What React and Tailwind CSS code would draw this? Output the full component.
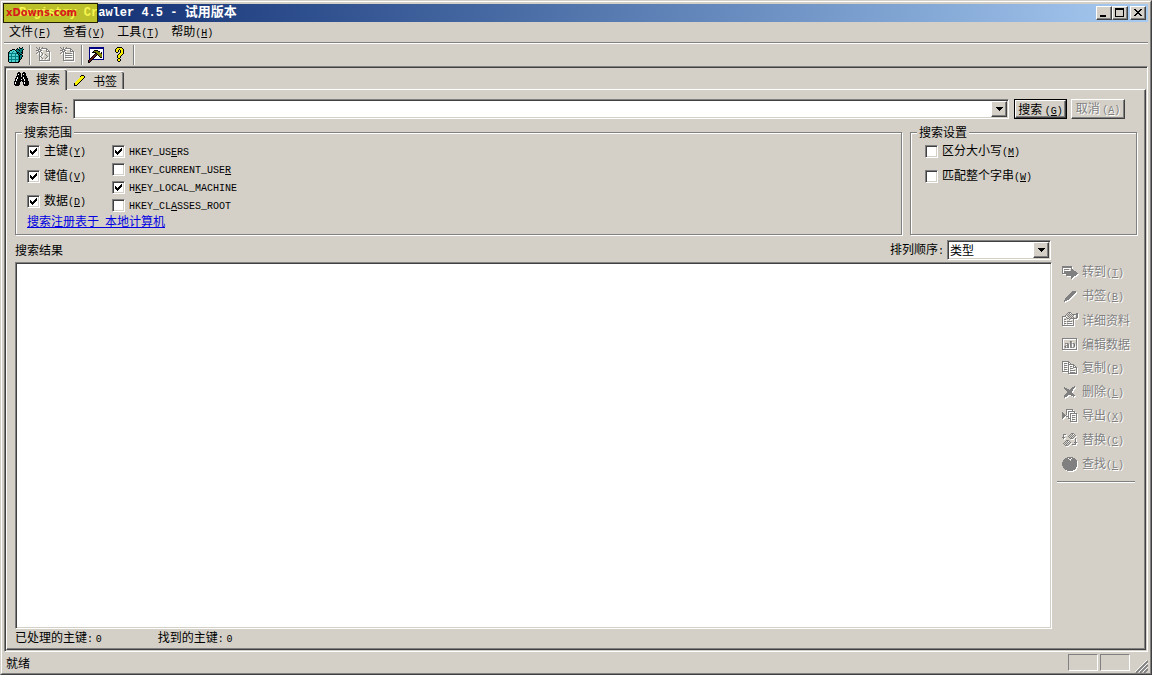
import React, { useState } from 'react';

const RAISED =
  'bg-[#d4d0c8] border border-t-white border-l-white border-r-[#404040] border-b-[#404040] shadow-[inset_-1px_-1px_0_#808080]';
const SUNKEN =
  'bg-white border border-t-[#808080] border-l-[#808080] border-r-white border-b-white shadow-[inset_1px_1px_0_#404040,inset_-1px_-1px_0_#d4d0c8]';
const MONO = "font-['Liberation_Mono',monospace] text-[10px]";

const PALETTE = {
  k: '#000000',
  g: '#808080',
  w: '#ffffff',
  t: '#008080',
  c: '#50d0d0',
  n: '#000080',
  y: '#f8f000',
  o: '#808000',
  r: '#601818',
};

const ICONS = {
  registry: [
    '...........k..k.',
    '.........k.tkkt.',
    '....kkk.ktkttttk',
    '..kkcccktttkttk.',
    '.kccctccktttttk.',
    'ktcctccctkkttkk.',
    'kttttttttktkttk.',
    'kcctccctccktkk..',
    'kcctccctcctkttk.',
    'kttttttttttkttk.',
    'kcctccctcctktk..',
    'kcctccctcctktk..',
    'kttttttttttkk...',
    'kcctccctcctk....',
    'kcctccctcckk....',
    '.kkkkkkkkkk.....',
  ],
  newKey: [
    'g..g..g.........',
    '.g.g.gggggg.....',
    '..ggg.....gg....',
    'ggg.gg....g.g...',
    '..ggg.....gggg..',
    '.g.g.g.......g..',
    'g..g..g......g..',
    '...g..g..g...g..',
    '...g.g....g..g..',
    '...gg......g.g..',
    '...g.g....g..g..',
    '...g..g..g...g..',
    '...g.........g..',
    '...ggggggggggg..',
  ],
  newValue: [
    'g..g..g.........',
    '.g.g.gggggg.....',
    '..ggg.....gg....',
    'ggg.gg....g.g...',
    '..ggg.....gggg..',
    '.g.g.g.......g..',
    'g..g.ggggggg.g..',
    '...g.........g..',
    '...g.ggggggg.g..',
    '...g.........g..',
    '...g.ggggggg.g..',
    '...g.........g..',
    '...g.........g..',
    '...ggggggggggg..',
  ],
  hammer: [
    '.nnnnnnnnnnnnnnn',
    '.nnnnnnnnnnnnnnn',
    '.nwwwwwwwwwwwwwn',
    '.nwwwwkkkkwwwwwn',
    '.nwwwkooookkwwwn',
    '.nwwkkkkoooowkwn',
    '.nwwwwwkkooookwn',
    '.nwwwwkrrkoooown',
    '.nwwwkrrkwkooown',
    '.nwwkrrkwwwkoown',
    '.nwkrrkwwwwwkkwn',
    '.nkrrkwwwwwwwwwn',
    '.krrknnnnnnnnnnn',
    'krrk............',
    'krk.............',
    'kk..............',
  ],
  help: [
    '.....kkkkk......',
    '....kyyyyyk.....',
    '...kyyykyyyk....',
    '...kyyk.kyyk....',
    '...kyyk.kyyk....',
    '....kk..kyyk....',
    '.......kyyyk....',
    '......kyyyk.....',
    '.....kyyyk......',
    '.....kyyk.......',
    '.....kyyk.......',
    '......kk........',
    '.....kyyk.......',
    '.....kyyk.......',
    '......kk........',
  ],
  binoculars: [
    '................',
    '....kk...kk.....',
    '...kkkk.kkkk....',
    '...kwkk.kwkk....',
    '...kkkk.kkkk....',
    '..kkkkk.kkkkk...',
    '..kwkkkkkwkkk...',
    '.kkwkkkkkwkkkk..',
    '.kwkkkkwkkwkkk..',
    '.kwkkkkkkkwkkk..',
    'kkkkkkk.kkkkkkk.',
    'kwkkkk...kwkkkk.',
    'kwkkkk...kwkkkk.',
    'kkkkkk...kkkkkk.',
    '.kkkk.....kkkk..',
  ],
  pencil: [
    '................',
    '................',
    '..........kkk...',
    '.........kyyyk..',
    '.........yyyyk..',
    '........yyyyk...',
    '.......yyyyk....',
    '......yyyyk.....',
    '.....yyyyk......',
    '....yyyyk.......',
    '...kyyyk........',
    '...kyyk.........',
    '...kkk..........',
    '................',
  ],
  goto: [
    '................',
    '................',
    'gggggggggg......',
    'gggggggggg......',
    'g........g......',
    'g.ggggg..gg.....',
    'g........ggg....',
    'g.gggggggggggg..',
    'g.ggggggggggggg.',
    'gggggggggggggggg',
    '....ggggggggggg.',
    '....gggggggggg..',
    '.........ggg....',
    '.........gg.....',
    '.........g......',
    '................',
  ],
  bookmark: [
    '................',
    '................',
    '................',
    '..........gggg..',
    '.........ggggg..',
    '........ggggg...',
    '.......ggggg....',
    '......ggggg.....',
    '.....ggggg......',
    '....ggggg.......',
    '...ggggg........',
    '...gggg.........',
    '..ggg...........',
    '..g.............',
    '................',
    '................',
  ],
  details: [
    '......ggg.......',
    '.....g.g.g....gg',
    '....g.g.g.gggggg',
    '...g.g.g.g.g..gg',
    'gggg..g.g.g...gg',
    'g...g..g.g.g..gg',
    'g....gg.ggggggg.',
    'g.gg...g...g....',
    'g..........g....',
    'g.gg.ggggg.g....',
    'g..........g....',
    'g.gg.ggggg.g....',
    'g..........g....',
    'gggggggggggg....',
  ],
  copy: [
    '................',
    'ggggggg.........',
    'g.....gg........',
    'g.ggg.g.g.......',
    'g.....gggggg....',
    'g.ggg.g....gg...',
    'g.....g.gg.g.g..',
    'g.ggg.g....gggg.',
    'g.....g.ggg...g.',
    'g.ggg.g.......g.',
    'g.....g.ggggg.g.',
    'ggggggg.......g.',
    '......g.ggggg.g.',
    '......ggggggggg.',
  ],
  remove: [
    '................',
    '................',
    '............g...',
    '..g.......ggg...',
    '..ggg....ggg....',
    '...gggg.ggg.....',
    '....ggggggg.....',
    '.....ggggg......',
    '.....ggggg......',
    '....ggggggg.....',
    '...ggggggggg....',
    '..gggg...gggg...',
    '..ggg......g....',
    '..g.............',
  ],
  export: [
    '................',
    '....ggggggg.....',
    '....g.....g.....',
    '....g.ggggggg...',
    'g...g.g.....g...',
    'gg..g.g.ggggggg.',
    'ggg.g.g.g.....g.',
    'gggg..g.g.ggg.g.',
    'ggg.ggg.g.....g.',
    'gg....g.g.ggg.g.',
    'g.....ggg.....g.',
    '........g.ggg.g.',
    '........g.....g.',
    '........ggggggg.',
  ],
  replace: [
    '................',
    '.........ggg....',
    '.ggg....g.g.g...',
    '.g.....g.g.g.g..',
    '.g....g.g.g.g...',
    'ggg....g.g.g....',
    '.g......ggg..g..',
    '.............g..',
    '....ggg......g..',
    '...g.g.g.....g..',
    '..g.g.g.g...ggg.',
    '.g.g.g.g.....g..',
    '..g.g.g...gggg..',
    '...ggg..........',
  ],
  find: [
    '................',
    '.....gggggg.....',
    '...ggg.gg.ggg...',
    '..ggggg..ggggg..',
    '.ggggggg.gggggg.',
    '.gggggggggggggg.',
    'ggggggggggggggg.',
    'ggggggggggggggg.',
    'ggggggggggggggg.',
    'ggggggggggggggg.',
    '.gggggggggggggg.',
    '.ggggggggggggg..',
    '..gggggggggggg..',
    '...gggggggggg...',
    '.....gggggg.....',
  ],
};

const WHITE_EDGE = 'drop-shadow-[1px_1px_0_#fff]';

const Icon = ({ name, className = '' }) => (
  <svg viewBox="0 0 16 16" shapeRendering="crispEdges" aria-hidden="true" className={`size-4 shrink-0 ${className}`}>
    {ICONS[name].map((row, y) =>
      [...row].map((c, x) =>
        c === '.' ? null : <rect key={`${x}-${y}`} x={x} y={y} width="1" height="1" fill={PALETTE[c]} />
      )
    )}
  </svg>
);

const EditIcon = ({ className = '' }) => (
  <svg viewBox="0 0 16 16" aria-hidden="true" className={`size-4 shrink-0 ${className}`}>
    <rect x="0.5" y="2.5" width="14" height="11" fill="none" stroke="#808080" shapeRendering="crispEdges" />
    <text x="2" y="12" fontFamily="Liberation Serif, serif" fontSize="11" fontWeight="bold" fill="#707070">ab</text>
  </svg>
);

const Arrow = () => (
  <svg viewBox="0 0 7 4" shapeRendering="crispEdges" aria-hidden="true" className="h-1 w-[7px]">
    <path d="M0 0h7v1H6v1H5v1H4v1H3V3H2V2H1V1H0z" />
  </svg>
);

// Accelerator key shown after a label, e.g. "(F)"
const Key = ({ k }) => (
  <span className={MONO}>
    (<u>{k}</u>)
  </span>
);

const Separator = () => <div className="mx-px h-5 w-[2px] border-l border-[#808080] bg-white" />;

const Check = ({ defaultChecked, children }) => (
  <label className="flex items-center gap-1 leading-4">
    <span className="relative flex">
      <input type="checkbox" defaultChecked={defaultChecked} className={`peer size-[13px] appearance-none ${SUNKEN}`} />
      <svg
        viewBox="0 0 7 7"
        shapeRendering="crispEdges"
        className="pointer-events-none absolute top-[3px] left-[3px] hidden size-[7px] peer-checked:block"
      >
        <path d="M0 2h1v1h1v1h1V3h1V2h1V1h1V0h1v3H6v1H5v1H4v1H3v1H2V6H1V5H0z" />
      </svg>
    </span>
    <span className="whitespace-pre">{children}</span>
  </label>
);

const MENUS = [
  ['文件', 'F'],
  ['查看', 'V'],
  ['工具', 'T'],
  ['帮助', 'H'],
];

const TOOLS = [
  ['registry', '注册表'],
  null,
  ['newKey', '新建主键', true],
  ['newValue', '新建键值', true],
  null,
  ['hammer', '选项'],
  ['help', '帮助'],
  null,
];

const SCOPES = [
  ['主键', 'Y'],
  ['键值', 'V'],
  ['数据', 'D'],
];

const HIVES = [
  ['HKEY_US', 'E', 'RS', true],
  ['HKEY_CURRENT_USE', 'R', '', false],
  ['H', 'K', 'EY_LOCAL_MACHINE', true],
  ['HKEY_CL', 'A', 'SSES_ROOT', false],
];

const ACTIONS = [
  ['goto', '转到', 'T'],
  ['bookmark', '书签', 'B'],
  ['details', '详细资料'],
  ['edit', '编辑数据'],
  ['copy', '复制', 'P'],
  ['remove', '删除', 'L'],
  ['export', '导出', 'X'],
  ['replace', '替换', 'C'],
  ['find', '查找', 'L'],
];

function TitleBar() {
  return (
    <header className="relative flex h-[18px] items-center bg-linear-to-r from-[#0a246a] to-[#a6caf0] pr-[2px] pl-4 text-white">
      <h1 className="flex-1 font-['Liberation_Mono','Noto_Sans_CJK_SC',monospace] text-[12px] leading-[18px] font-bold">
        Registry Crawler 4.5 - <span className="text-[13px]">试用版本</span>
      </h1>
      <div className="flex text-black">
        <button aria-label="最小化" className={`h-[14px] w-4 ${RAISED}`}>
          <svg viewBox="0 0 14 12" shapeRendering="crispEdges">
            <path d="M3 8h6v2H3z" />
          </svg>
        </button>
        <button aria-label="最大化" className={`h-[14px] w-4 ${RAISED}`}>
          <svg viewBox="0 0 14 12" shapeRendering="crispEdges">
            <path fillRule="evenodd" d="M2 1h9v9H2zM3 3v6h7V3z" />
          </svg>
        </button>
        <button aria-label="关闭" className={`ml-[2px] h-[14px] w-4 ${RAISED}`}>
          <svg viewBox="0 0 14 12" shapeRendering="crispEdges">
            <path d="M3 2h2v1h1v1h2V3h1V2h2v1h-1v1H9v1H8v1h1v1h1v1h1v1H9V8H8V7H6v1H5v1H3V8h1V7h1V6h1V5H5V4H4V3H3z" />
          </svg>
        </button>
      </div>
      {/* site badge lying over the caption */}
      <div className="absolute -top-px left-0 h-5 w-[95px] border border-[#202000] bg-[#f6f112]/75 pl-[2px] font-['DejaVu_Sans',sans-serif] text-[10px] leading-[18px] font-bold text-[#d81818]">
        xDowns.com
      </div>
    </header>
  );
}

function Tabs({ tab, setTab }) {
  return (
    <div role="tablist" className="flex h-[21px] items-end">
      <button
        role="tab"
        aria-selected={tab === 'search'}
        onClick={() => setTab('search')}
        className="relative z-10 -mb-px flex h-[21px] items-center gap-[6px] rounded-t-[2px] border-t border-l border-white bg-[#d4d0c8] px-[7px] pb-[2px] shadow-[inset_-1px_0_0_#404040,inset_-2px_0_0_#808080]"
      >
        <Icon name="binoculars" />
        搜索
      </button>
      <button
        role="tab"
        aria-selected={tab === 'bookmarks'}
        onClick={() => setTab('bookmarks')}
        className="flex h-[18px] items-center gap-[6px] rounded-t-[2px] border-t border-white pr-[7px] pl-1 shadow-[inset_-1px_0_0_#404040,inset_-2px_0_0_#808080]"
      >
        <Icon name="pencil" />
        书签
      </button>
    </div>
  );
}

function SearchBar() {
  return (
    <div className="flex items-start pr-3">
      <label htmlFor="target" className="w-[58px] leading-[18px] whitespace-nowrap">
        搜索目标<span className={MONO}>:</span>
      </label>
      <div className={`flex h-5 flex-1 p-px ${SUNKEN}`}>
        <input id="target" type="text" className="min-w-0 flex-1 bg-transparent px-1 outline-none" />
        <button aria-label="展开" className={`flex w-4 items-center justify-center ${RAISED}`}>
          <Arrow />
        </button>
      </div>
      <div className="ml-[5px] border border-black">
        <button className={`block h-[18px] w-[51px] whitespace-nowrap leading-[16px] ${RAISED}`}>
          搜索 <Key k="G" />
        </button>
      </div>
      <button
        disabled
        className={`ml-1 h-5 w-[54px] whitespace-nowrap leading-[16px] text-[#808080] [text-shadow:1px_1px_0_#fff] ${RAISED}`}
      >
        取消 <Key k="A" />
      </button>
    </div>
  );
}

const Group = ({ title, className = '', children }) => (
  <fieldset
    className={`border border-[#808080] shadow-[1px_1px_0_#fff,inset_1px_1px_0_#fff] ${className}`}
  >
    <legend className="ml-[6px] bg-[#d4d0c8] px-[2px] leading-[14px]">{title}</legend>
    {children}
  </fieldset>
);

function Options() {
  return (
    <div className="mt-[5px] flex gap-2">
      <Group title="搜索范围" className="flex-1">
        <div className="pb-[3px] pl-[11px]">
          <div className="flex gap-[26px]">
            <div>
              {SCOPES.map(([label, k]) => (
                <div key={label} className="flex h-[25px] items-center">
                  <Check defaultChecked>
                    {label}<Key k={k} />
                  </Check>
                </div>
              ))}
            </div>
            <div className="pt-[3px]">
              {HIVES.map(([before, k, after, on]) => (
                <div key={before} className="flex h-[18px] items-center">
                  <Check defaultChecked={on}>
                    <span className={MONO}>{before}<u>{k}</u>{after}</span>
                  </Check>
                </div>
              ))}
            </div>
          </div>
          <a href="#computer" className="block w-fit leading-[14px] text-[#0000e0] underline">
            搜索注册表于<span className={MONO}> </span>本地计算机
          </a>
        </div>
      </Group>
      <Group title="搜索设置" className="w-[227px]">
        <div className="pl-[14px]">
          <div className="flex h-[25px] items-center">
            <Check>区分大小写<Key k="M" /></Check>
          </div>
          <div className="flex h-[25px] items-center">
            <Check>匹配整个字串<Key k="W" /></Check>
          </div>
        </div>
      </Group>
    </div>
  );
}

function Results() {
  return (
    <section className="flex flex-1 flex-col">
      <div className="flex h-5 items-center justify-between pr-px">
        <h2>搜索结果</h2>
        <div className="flex items-center gap-[3px]">
          <label htmlFor="sort">排列顺序<span className={MONO}>:</span></label>
          <div className="relative">
            <select id="sort" className={`block h-5 w-[104px] appearance-none pl-[2px] leading-4 ${SUNKEN}`}>
              <option>类型</option>
            </select>
            <span className={`pointer-events-none absolute top-[2px] right-[2px] flex size-4 items-center justify-center ${RAISED}`}>
              <Arrow />
            </span>
          </div>
        </div>
      </div>
      <div className={`mt-[2px] flex-1 ${SUNKEN}`} />
      <div className="flex h-[19px] items-center gap-[56px] whitespace-pre leading-4">
        <span>已处理的主键<span className={MONO}>:</span> <span className={MONO}>0</span></span>
        <span>找到的主键<span className={MONO}>:</span> <span className={MONO}>0</span></span>
      </div>
    </section>
  );
}

function Actions() {
  return (
    <aside className="w-20 pt-5 pr-[2px]">
      {ACTIONS.map(([icon, label, k]) => (
        <button
          key={icon}
          disabled
          className="flex h-6 items-center gap-1 pl-[5px] whitespace-nowrap text-[#808080] [text-shadow:1px_1px_0_#fff]"
        >
          {icon === 'edit' ? <EditIcon className={WHITE_EDGE} /> : <Icon name={icon} className={WHITE_EDGE} />}
          <span>{label}{k && <Key k={k} />}</span>
        </button>
      ))}
      <hr className="mt-[5px] h-[2px] border-t border-[#808080] bg-white" />
    </aside>
  );
}

export default function App() {
  const [tab, setTab] = useState('search');

  return (
    <div className="flex min-h-screen flex-col border border-t-[#d4d0c8] border-r-[#404040] border-b-[#404040] border-l-[#d4d0c8] bg-[#d4d0c8] font-['Noto_Sans_CJK_SC',sans-serif] text-[12px] leading-4 text-black">
      <div className="flex flex-1 flex-col border border-t-white border-r-[#808080] border-b-[#808080] border-l-white pt-[2px] pr-[2px] pl-px">
        <TitleBar />

        <nav className="flex h-5 items-center">
          {MENUS.map(([label, k]) => (
            <button key={k} className="px-[6px] whitespace-nowrap">
              {label}<Key k={k} />
            </button>
          ))}
        </nav>

        <div className="ml-px border-t border-[#808080]">
          <div className="flex h-[23px] items-center border-t border-white">
            {TOOLS.map((tool, i) =>
              tool ? (
                <button
                  key={tool[0]}
                  title={tool[1]}
                  disabled={tool[2]}
                  className="flex h-[22px] w-6 items-center justify-center"
                >
                  <Icon name={tool[0]} className={tool[2] ? WHITE_EDGE : ''} />
                </button>
              ) : (
                <Separator key={i} />
              )
            )}
          </div>
        </div>

        <main className="ml-px flex flex-1 flex-col border border-t-[#808080] border-r-white border-b-white border-l-[#808080] pr-px pb-px shadow-[inset_1px_1px_0_#404040]">
          <div className="flex flex-1 flex-col pt-px pl-px">
            <Tabs tab={tab} setTab={setTab} />
            <div className="flex flex-1 flex-col border border-t-white border-r-[#404040] border-b-[#404040] border-l-white pt-[9px] pr-2 pl-2 shadow-[inset_-1px_-1px_0_#808080]">
              <SearchBar />
              <Options />
              <div className="mt-[5px] mb-px flex flex-1 gap-[5px]">
                <Results />
                <Actions />
              </div>
            </div>
          </div>
        </main>

        <footer className="flex h-[21px] items-center gap-[2px] pl-[3px]">
          <span className="flex-1">就绪</span>
          <div className="h-[17px] w-[30px] border border-t-[#808080] border-r-white border-b-white border-l-[#808080]" />
          <div className="h-[17px] w-[30px] border border-t-[#808080] border-r-white border-b-white border-l-[#808080]" />
          <svg viewBox="0 0 13 13" className="ml-[3px] size-[13px] self-end" aria-hidden="true">
            <path d="M1 13 13 1M5 13 13 5M9 13l4-4" stroke="#808080" strokeWidth="1.8" />
            <path d="M0 12 12 0M4 12l9-9M8 12l5-5" stroke="#fff" strokeWidth="0.9" />
          </svg>
        </footer>
      </div>
    </div>
  );
}
